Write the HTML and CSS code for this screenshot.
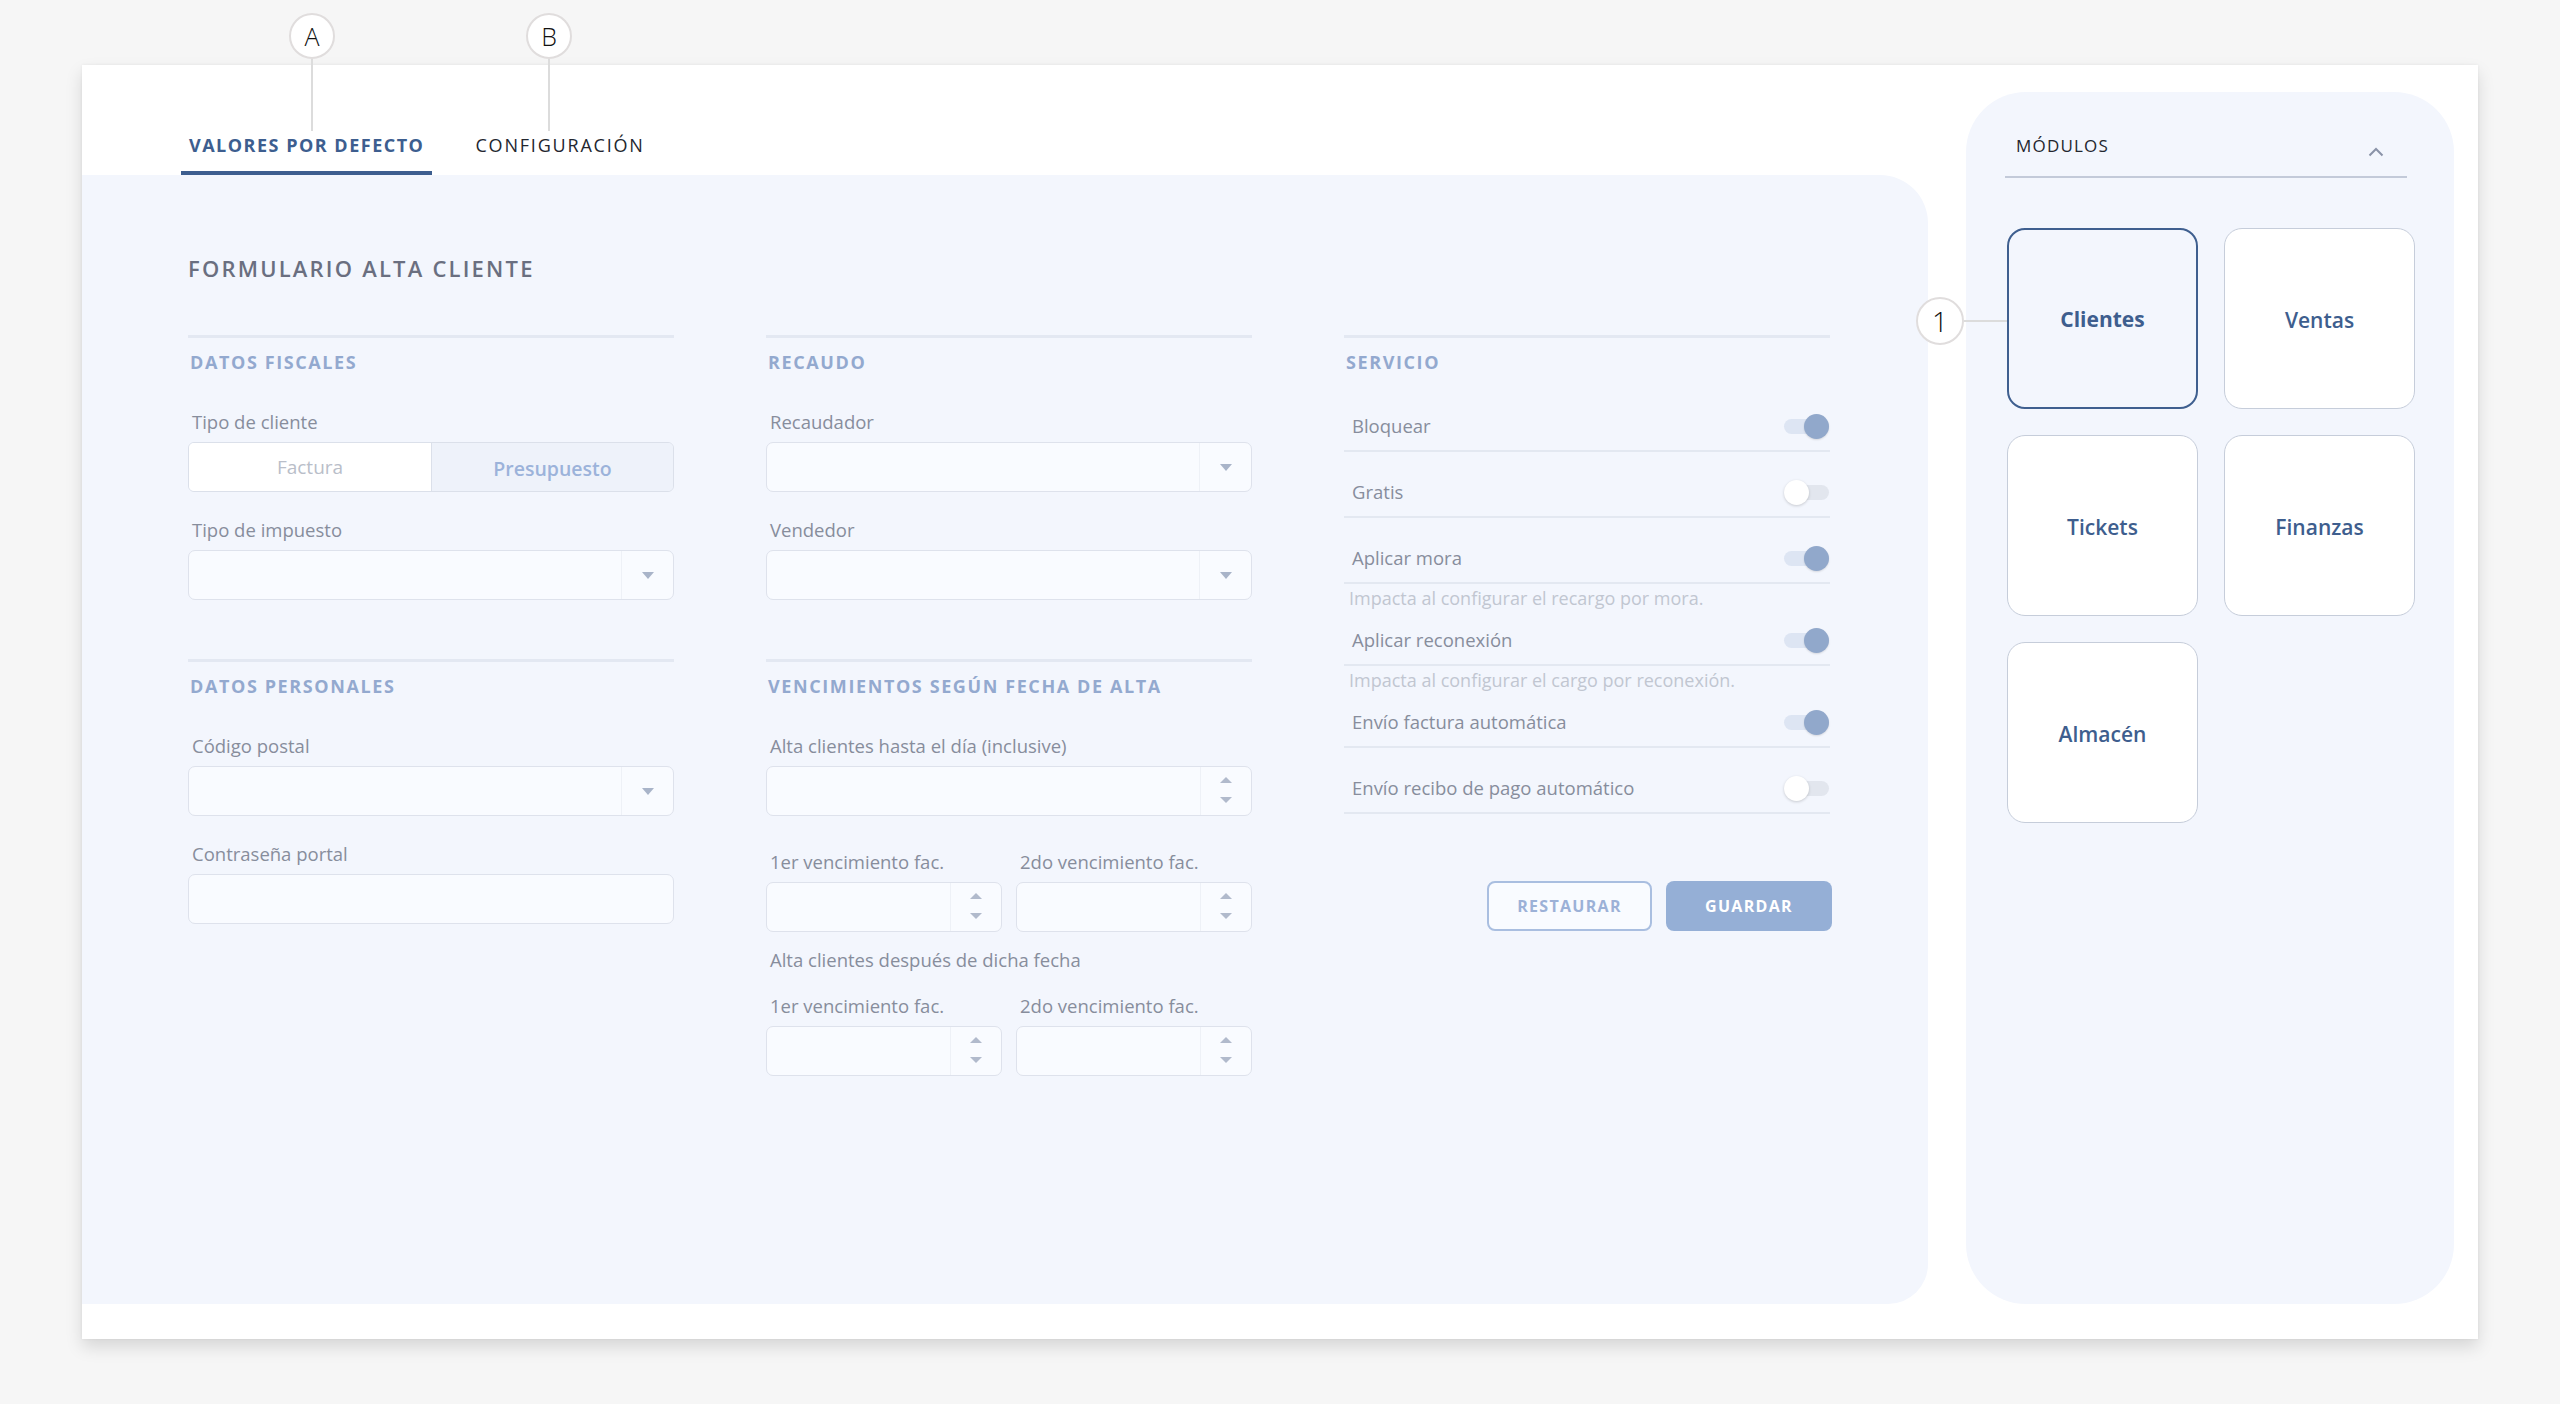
FILE: index.html
```html
<!DOCTYPE html>
<html lang="es">
<head>
<meta charset="utf-8">
<title>Formulario alta cliente</title>
<link rel="stylesheet" href="styles.css">
</head>
<body>
<div class="page">
  <div class="card">
    <div class="main">
      <nav class="tabs">
        <div class="tab active">VALORES POR DEFECTO</div>
        <div class="tab">CONFIGURACIÓN</div>
      </nav>
      <section class="form-panel">
        <h1 class="form-title">FORMULARIO ALTA CLIENTE</h1>
        <div class="columns">
          <div class="col">
            <div class="section">
              <h2 class="sec-head">DATOS FISCALES</h2>
              <div class="field">
                <div class="label">Tipo de cliente</div>
                <div class="segmented">
                  <div class="seg-opt">Factura</div>
                  <div class="seg-opt on">Presupuesto</div>
                </div>
              </div>
              <div class="field">
                <div class="label">Tipo de impuesto</div>
                <div class="select"><div class="sel-btn"><span class="tri-down"></span></div></div>
              </div>
            </div>
            <div class="section">
              <h2 class="sec-head">DATOS PERSONALES</h2>
              <div class="field">
                <div class="label">Código postal</div>
                <div class="select"><div class="sel-btn"><span class="tri-down"></span></div></div>
              </div>
              <div class="field">
                <div class="label">Contraseña portal</div>
                <div class="select"></div>
              </div>
            </div>
          </div>

          <div class="col">
            <div class="section">
              <h2 class="sec-head">RECAUDO</h2>
              <div class="field">
                <div class="label">Recaudador</div>
                <div class="select"><div class="sel-btn"><span class="tri-down"></span></div></div>
              </div>
              <div class="field">
                <div class="label">Vendedor</div>
                <div class="select"><div class="sel-btn"><span class="tri-down"></span></div></div>
              </div>
            </div>
            <div class="section">
              <h2 class="sec-head">VENCIMIENTOS SEGÚN FECHA DE ALTA</h2>
              <div class="field">
                <div class="label">Alta clientes hasta el día (inclusive)</div>
                <div class="select"><div class="spin"><span class="tri-up"></span><span class="tri-down sm"></span></div></div>
              </div>
              <div class="pair pair-first">
                <div class="field">
                  <div class="label">1er vencimiento fac.</div>
                  <div class="select"><div class="spin"><span class="tri-up"></span><span class="tri-down sm"></span></div></div>
                </div>
                <div class="field">
                  <div class="label">2do vencimiento fac.</div>
                  <div class="select"><div class="spin"><span class="tri-up"></span><span class="tri-down sm"></span></div></div>
                </div>
              </div>
              <div class="label sub">Alta clientes después de dicha fecha</div>
              <div class="pair pair-second">
                <div class="field">
                  <div class="label">1er vencimiento fac.</div>
                  <div class="select"><div class="spin"><span class="tri-up"></span><span class="tri-down sm"></span></div></div>
                </div>
                <div class="field">
                  <div class="label">2do vencimiento fac.</div>
                  <div class="select"><div class="spin"><span class="tri-up"></span><span class="tri-down sm"></span></div></div>
                </div>
              </div>
            </div>
          </div>

          <div class="col">
            <div class="section">
              <h2 class="sec-head">SERVICIO</h2>
              <div class="rows">
                <div class="row"><span class="row-label">Bloquear</span><span class="toggle on"><span class="knob"></span></span></div>
                <div class="row"><span class="row-label">Gratis</span><span class="toggle"><span class="knob"></span></span></div>
                <div class="row"><span class="row-label">Aplicar mora</span><span class="toggle on"><span class="knob"></span></span></div>
                <div class="hint">Impacta al configurar el recargo por mora.</div>
                <div class="row short"><span class="row-label">Aplicar reconexión</span><span class="toggle on"><span class="knob"></span></span></div>
                <div class="hint">Impacta al configurar el cargo por reconexión.</div>
                <div class="row short"><span class="row-label">Envío factura automática</span><span class="toggle on"><span class="knob"></span></span></div>
                <div class="row"><span class="row-label">Envío recibo de pago automático</span><span class="toggle"><span class="knob"></span></span></div>
              </div>
              <div class="actions">
                <button class="btn btn-outline">RESTAURAR</button>
                <button class="btn btn-fill">GUARDAR</button>
              </div>
            </div>
          </div>
        </div>
      </section>
    </div>

    <aside class="modules">
      <div class="mod-head">
        <span class="mod-title">MÓDULOS</span>
        <svg class="chev" width="16" height="10" viewBox="0 0 16 10"><path d="M1.5 8.5 L8 2 L14.5 8.5" fill="none" stroke="#8a93a8" stroke-width="2"/></svg>
      </div>
      <div class="mod-grid">
        <div class="mod-card active">Clientes</div>
        <div class="mod-card">Ventas</div>
        <div class="mod-card">Tickets</div>
        <div class="mod-card">Finanzas</div>
        <div class="mod-card">Almacén</div>
      </div>
    </aside>
  </div>

  <div class="anno anno-a"><div class="anno-circle">A</div><div class="anno-vline"></div></div>
  <div class="anno anno-b"><div class="anno-circle">B</div><div class="anno-vline"></div></div>
  <div class="anno anno-1"><div class="anno-circle big">1</div><div class="anno-hline"></div></div>
</div>
</body>
</html>
```

FILE: styles.css
```css
* { box-sizing: border-box; }

body {
  margin: 0;
  background: #f6f6f6;
  font-family: "Open Sans", "Liberation Sans", sans-serif;
}

.page {
  position: relative;
  width: 2560px;
  height: 1404px;
  padding: 65px 0 0 82px;
  overflow: hidden;
}

.card {
  width: 2396px;
  height: 1274px;
  background: #ffffff;
  box-shadow: 0 8px 16px rgba(0, 0, 0, 0.13), 0 0 3px rgba(0, 0, 0, 0.06);
  display: flex;
  align-items: flex-end;
  gap: 38px;
  padding: 0 24px 35px 0;
}

.main {
  width: 1846px;
  height: 1239px;
  display: flex;
  flex-direction: column;
}

/* Tabs */
.tabs {
  height: 110px;
  display: flex;
  align-items: flex-end;
  gap: 35px;
  padding-left: 99px;
}

.tab {
  padding: 0 8px 14px;
  border-bottom: 4px solid transparent;
  font-size: 18px;
  line-height: 24px;
  letter-spacing: 1.8px;
  color: #23262f;
}

.tab.active {
  color: #3d5e8f;
  font-weight: 700;
  letter-spacing: 1.5px;
  border-bottom-color: #3d5e8f;
}

/* Form panel */
.form-panel {
  flex: 1;
  background: #f3f6fd;
  border-radius: 0 48px 40px 0;
  padding: 78px 0 0 106px;
}

.form-title {
  margin: 0 0 52px;
  padding-left: 0;
  font-size: 22px;
  line-height: 30px;
  font-weight: 600;
  letter-spacing: 2.2px;
  color: #6a6f80;
}

.columns {
  display: grid;
  grid-template-columns: repeat(3, 486px);
  column-gap: 92px;
  align-items: start;
}

.section {
  border-top: 3px solid #e3e8f2;
  padding-top: 12px;
  margin-bottom: 59px;
}

.sec-head {
  margin: 0 0 36px;
  padding-left: 2px;
  font-size: 18px;
  line-height: 24px;
  font-weight: 700;
  letter-spacing: 1.6px;
  color: #93a9cf;
}

.field { margin-bottom: 26px; }
.field:last-child { margin-bottom: 0; }

.label {
  padding-left: 4px;
  margin-bottom: 8px;
  font-size: 18.5px;
  line-height: 24px;
  color: #878d9c;
}

.label.sub { margin: 16px 0 22px; }

.pair {
  display: grid;
  grid-template-columns: 1fr 1fr;
  column-gap: 14px;
}

.pair .field { margin-bottom: 0; }
.pair-first { margin-top: 34px; }

/* Controls */
.segmented {
  height: 50px;
  display: grid;
  grid-template-columns: 1fr 1fr;
  border: 1px solid #dbe0ea;
  border-radius: 6px;
  overflow: hidden;
}

.seg-opt {
  display: flex;
  align-items: center;
  justify-content: center;
  background: #ffffff;
  color: #b9bec9;
  font-size: 19px;
}

.seg-opt.on {
  background: #eef2fa;
  color: #9cb3da;
  font-weight: 600;
  font-size: 19.5px;
  border-left: 1px solid #dbe0ea;
  padding-top: 3px;
}

.select {
  height: 50px;
  border: 1px solid #dee2ec;
  border-radius: 7px;
  background: #f9fbff;
  display: flex;
  justify-content: flex-end;
}

.sel-btn {
  width: 52px;
  border-left: 1px solid #eef1f7;
  display: flex;
  align-items: center;
  justify-content: center;
}

.tri-down {
  width: 0;
  height: 0;
  border-left: 6px solid transparent;
  border-right: 6px solid transparent;
  border-top: 7px solid #a9b4c9;
}

.tri-up {
  width: 0;
  height: 0;
  border-left: 6px solid transparent;
  border-right: 6px solid transparent;
  border-bottom: 6px solid #b1bacc;
}

.tri-down.sm { border-top: 6px solid #b1bacc; }

.spin {
  width: 51px;
  border-left: 1px solid #eef1f7;
  display: flex;
  flex-direction: column;
  align-items: center;
  justify-content: space-between;
  padding: 10px 0 12px;
}

/* Servicio rows */
.rows { margin-top: -24px; }

.row {
  height: 66px;
  padding: 27px 1px 11px 8px;
  border-bottom: 2px solid #e3e8f1;
  display: flex;
  align-items: center;
  justify-content: space-between;
}

.row.short {
  height: 54px;
  padding-top: 15px;
}

.row-label {
  font-size: 18.5px;
  line-height: 24px;
  color: #878d9c;
}

.hint {
  height: 28px;
  padding-left: 5px;
  font-size: 18px;
  line-height: 28px;
  color: #c1c6d1;
}

.toggle {
  position: relative;
  width: 45px;
  height: 25px;
}

.toggle::before {
  content: "";
  position: absolute;
  left: 0;
  right: 0;
  top: 5px;
  height: 15px;
  border-radius: 8px;
  background: #e2e6ee;
}

.toggle .knob {
  position: absolute;
  top: 0;
  left: 0;
  width: 25px;
  height: 25px;
  border-radius: 50%;
  background: #ffffff;
  box-shadow: 0 1px 3px rgba(0, 0, 0, 0.18);
}

.toggle.on::before { background: #dde5f3; }

.toggle.on .knob {
  left: 20px;
  background: #91a8cb;
  box-shadow: 0 1px 2px rgba(0, 0, 0, 0.12);
}

.actions {
  margin-top: 67px;
  display: flex;
  justify-content: flex-end;
  gap: 14px;
  margin-right: -2px;
}

.btn {
  height: 50px;
  width: 165px;
  border-radius: 8px;
  font-family: "Open Sans", "Liberation Sans", sans-serif;
  font-size: 16px;
  font-weight: 700;
  letter-spacing: 1.3px;
  cursor: pointer;
}

.btn-outline {
  background: #f9fbff;
  border: 2px solid #a9bee0;
  color: #9cb1d7;
}

.btn-fill {
  width: 166px;
  background: #95afd6;
  border: none;
  color: #ffffff;
}

/* Modules */
.modules {
  width: 488px;
  height: 1212px;
  background: #f3f6fd;
  border-radius: 60px;
  padding: 36px 0 0 39px;
}

.mod-head {
  width: 402px;
  height: 86px;
  padding: 36px 23px 12px 11px;
  margin-top: -36px;
  border-bottom: 2px solid #c3cad9;
  display: flex;
  align-items: center;
  justify-content: space-between;
}

.mod-title {
  font-size: 17px;
  line-height: 36px;
  letter-spacing: 1.2px;
  color: #23262f;
}

.chev { margin-top: 12px; }

.mod-grid {
  margin: 50px 0 0 2px;
  display: grid;
  grid-template-columns: repeat(2, 191px);
  grid-auto-rows: 181px;
  column-gap: 26px;
  row-gap: 26px;
}

.mod-card {
  display: flex;
  align-items: center;
  justify-content: center;
  background: #ffffff;
  border: 1px solid #c6cdda;
  border-radius: 18px;
  font-size: 21px;
  font-weight: 600;
  color: #3e5e8e;
  padding-top: 2px;
}

.mod-card.active {
  background: #f3f6fd;
  border: 2px solid #3f5f8f;
  font-weight: 700;
  padding-top: 0;
}

/* Annotations */
.anno {
  position: absolute;
  display: flex;
  align-items: center;
}

.anno-a { left: 289px; top: 13px; flex-direction: column; }
.anno-b { left: 526px; top: 13px; flex-direction: column; }
.anno-1 { left: 1916px; top: 297px; }

.anno-circle {
  width: 46px;
  height: 46px;
  border: 2px solid #e0dddd;
  border-radius: 50%;
  background: #ffffff;
  display: flex;
  align-items: center;
  justify-content: center;
  font-size: 25px;
  font-weight: 300;
  color: #111111;
}

.anno-circle.big {
  width: 48px;
  height: 48px;
  font-size: 28px;
}

.anno-vline {
  width: 2px;
  height: 72px;
  background: #dcdcdc;
}

.anno-hline {
  width: 43px;
  height: 2px;
  background: #dcdcdc;
}
```
